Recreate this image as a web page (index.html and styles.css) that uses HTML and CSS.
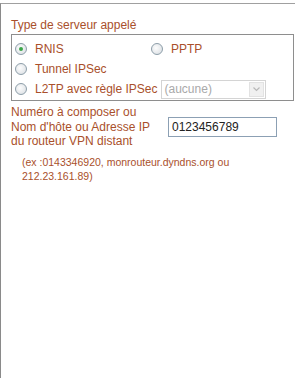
FILE: index.html
```html
<!DOCTYPE html>
<html>

<head>
    <link rel="stylesheet" href="styles.css">
</head>

<body>
    <div class="frame">
        <div class="title">Type de serveur appelé</div>

        <div class="group">
            <div class="row">
                <label class="opt opt-first"><span class="radio checked"></span>RNIS</label>
                <label class="opt"><span class="radio"></span>PPTP</label>
            </div>
            <div class="row">
                <label class="opt"><span class="radio"></span>Tunnel IPSec</label>
            </div>
            <div class="row">
                <label class="opt"><span class="radio"></span>L2TP avec règle IPSec</label>
                <div class="select">
                    <span class="select-text">(aucune)</span>
                    <span class="select-btn">
                        <svg width="7" height="5" viewBox="0 0 7 5"><path d="M0.5 0.5 L3.5 3.5 L6.5 0.5" fill="none" stroke="#b8b8b8" stroke-width="1.2"/></svg>
                    </span>
                </div>
            </div>
        </div>

        <div class="host">
            <div class="host-label">Numéro à composer ou<br>Nom d'hôte ou Adresse IP<br>du routeur VPN distant</div>
            <div class="input">0123456789</div>
        </div>

        <div class="hint">(ex :0143346920, monrouteur.dyndns.org ou<br>212.23.161.89)</div>
    </div>
</body>

</html>
```

FILE: styles.css
```css
html, body {
    margin: 0;
    padding: 0;
    background: #fff;
}

body {
    font-family: "Liberation Sans", Arial, sans-serif;
    font-size: 12px;
    color: #a9502b;
}

.frame {
    margin-top: 3px;
    height: 375px;
    border-left: 1px solid #8a8a8a;
    border-top: 1px solid #a0a0a0;
    padding-left: 10px;
    box-sizing: border-box;
}

.title {
    padding-top: 14px;
    line-height: 14px;
}

.group {
    margin-top: 2px;
    width: 283px;
    height: 67px;
    border: 1px solid #8e8e8e;
    box-sizing: border-box;
    padding: 4px 0 0 3px;
    display: flex;
    flex-direction: column;
}

.row {
    display: flex;
    align-items: center;
    height: 20px;
}

.opt {
    display: flex;
    align-items: center;
}

.opt-first {
    width: 136px;
}

.radio {
    width: 12px;
    height: 12px;
    border: 1px solid #8d9ea9;
    border-radius: 50%;
    box-sizing: border-box;
    background: radial-gradient(circle at 40% 40%, #fdfdfd, #d6dbe0);
    margin-right: 8px;
    position: relative;
}

.radio.checked::after {
    content: "";
    position: absolute;
    left: 3px;
    top: 3px;
    width: 4px;
    height: 4px;
    border-radius: 50%;
    background: #3ca64a;
}

.select {
    margin-left: 3px;
    width: 105px;
    height: 19px;
    border: 1px solid #d4d4d4;
    box-sizing: border-box;
    display: flex;
    align-items: center;
    justify-content: space-between;
    color: #a9a9a9;
}

.select-text {
    padding-left: 3px;
}

.select-btn {
    width: 15px;
    height: 15px;
    margin-right: 1px;
    background: #f0f0f0;
    border: 1px solid #e2e2e2;
    box-sizing: border-box;
    display: flex;
    align-items: center;
    justify-content: center;
}

.host {
    display: flex;
    align-items: flex-start;
    margin-top: 4px;
}

.host-label {
    width: 157px;
    line-height: 14.5px;
}

.input {
    margin-top: 12px;
    width: 109px;
    height: 20px;
    border: 1px solid #8ca0b4;
    box-sizing: border-box;
    padding: 2px 0 0 3px;
    color: #222;
    line-height: 14px;
}

.hint {
    margin-top: 6px;
    padding-left: 11px;
    font-size: 10.5px;
    line-height: 14px;
}
```
